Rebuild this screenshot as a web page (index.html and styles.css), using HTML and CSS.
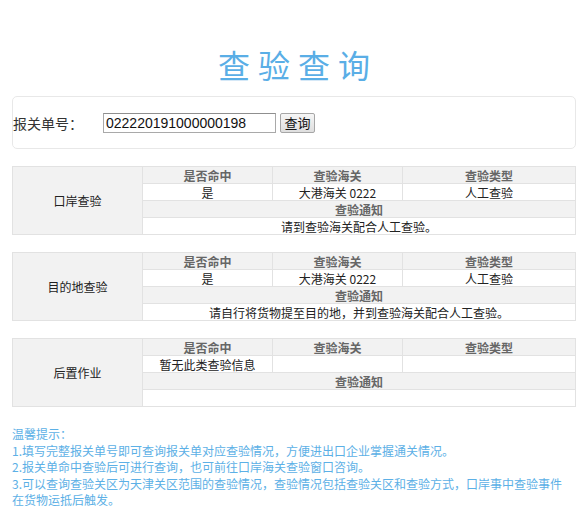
FILE: index.html
```html
<!DOCTYPE html>
<html lang="zh-CN">
<head>
    <meta charset="UTF-8">
    <title>查验查询</title>
    <link rel="stylesheet" href="styles.css">
</head>
<body>
    <div class="page">
        <h1 class="title">查验查询</h1>

        <div class="search-box">
            <label class="search-label" for="entryNo">报关单号：</label>
            <input type="text" id="entryNo" class="search-input" value="022220191000000198">
            <button class="search-btn">查询</button>
        </div>

        <table class="result">
            <tr>
                <th class="cat" rowspan="4">口岸查验</th>
                <th class="col">是否命中</th>
                <th class="col">查验海关</th>
                <th>查验类型</th>
            </tr>
            <tr>
                <td>是</td>
                <td>大港海关 0222</td>
                <td>人工查验</td>
            </tr>
            <tr><th colspan="3">查验通知</th></tr>
            <tr><td colspan="3">请到查验海关配合人工查验。</td></tr>
        </table>

        <table class="result">
            <tr>
                <th class="cat" rowspan="4">目的地查验</th>
                <th class="col">是否命中</th>
                <th class="col">查验海关</th>
                <th>查验类型</th>
            </tr>
            <tr>
                <td>是</td>
                <td>大港海关 0222</td>
                <td>人工查验</td>
            </tr>
            <tr><th colspan="3">查验通知</th></tr>
            <tr><td colspan="3">请自行将货物提至目的地，并到查验海关配合人工查验。</td></tr>
        </table>

        <table class="result">
            <tr>
                <th class="cat" rowspan="4">后置作业</th>
                <th class="col">是否命中</th>
                <th class="col">查验海关</th>
                <th>查验类型</th>
            </tr>
            <tr>
                <td>暂无此类查验信息</td>
                <td></td>
                <td></td>
            </tr>
            <tr><th colspan="3">查验通知</th></tr>
            <tr><td colspan="3"></td></tr>
        </table>

        <div class="tips">
            <p>温馨提示：</p>
            <p>1.填写完整报关单号即可查询报关单对应查验情况，方便进出口企业掌握通关情况。</p>
            <p>2.报关单命中查验后可进行查询，也可前往口岸海关查验窗口咨询。</p>
            <p>3.可以查询查验关区为天津关区范围的查验情况，查验情况包括查验关区和查验方式，口岸事中查验事件在货物运抵后触发。</p>
        </div>
    </div>
</body>
</html>
```

FILE: styles.css
```css
* {
    margin: 0;
    padding: 0;
    box-sizing: border-box;
}

body {
    font-family: "Noto Sans CJK SC", "Liberation Sans", sans-serif;
    background: #fff;
    color: #333;
}

.page {
    width: 564px;
    margin: 0 auto;
}

.title {
    padding-top: 44px;
    height: 84px;
    line-height: 40px;
    font-size: 32px;
    font-weight: normal;
    letter-spacing: 8px;
    text-indent: 8px;
    text-align: center;
    color: #5aaee6;
}

.search-box {
    margin-top: 12px;
    height: 53px;
    border: 1px solid #e8e8e8;
    border-radius: 5px;
    display: flex;
    align-items: center;
    padding-top: 1px;
}

.search-label {
    width: 90px;
    font-size: 14px;
    color: #333;
}

.search-input {
    width: 173px;
    height: 20px;
    padding: 0 2px;
    border: 1px solid #a9a9a9;
    border-top-color: #8f8f8f;
    font-family: "Liberation Sans", sans-serif;
    font-size: 14px;
    color: #111;
    outline: none;
}

.search-btn {
    margin-left: 4px;
    width: 35px;
    height: 20px;
    border: 1px solid #a6a6a6;
    border-radius: 2px;
    background: linear-gradient(#f6f6f6, #dedede);
    font-family: "Noto Sans CJK SC", sans-serif;
    font-size: 13px;
    line-height: 16px;
    color: #111;
}

.result {
    width: 564px;
    margin-top: 17px;
    border-collapse: collapse;
    table-layout: fixed;
    font-size: 12px;
}

.result th,
.result td {
    height: 17px;
    padding: 0;
    line-height: 15px;
    border: 1px solid #e2e2e2;
    text-align: center;
    vertical-align: middle;
}

.result th {
    background: #f2f2f2;
    font-weight: bold;
    color: #666;
}

.result th.cat {
    width: 130px;
    font-size: 12px;
    font-weight: normal;
    color: #222;
}

.result th.col {
    width: 130px;
}

.result td {
    background: #fff;
    color: #222;
}

.tips {
    margin-top: 19px;
    padding-right: 6px;
    font-size: 12px;
    line-height: 16.5px;
    color: #5cb0e6;
}
```
